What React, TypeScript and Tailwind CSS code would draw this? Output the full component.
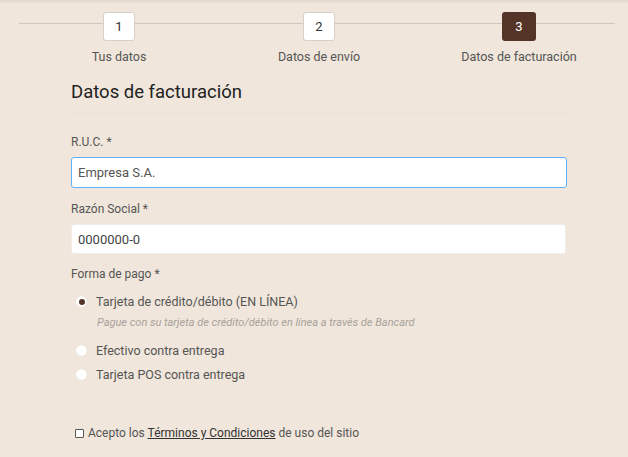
import React, { useState } from 'react';

const STEPS = [
  { n: 1, label: 'Tus datos' },
  { n: 2, label: 'Datos de envío' },
  { n: 3, label: 'Datos de facturación' },
];

const PAYMENTS = [
  { id: 'online', label: 'Tarjeta de crédito/débito (EN LÍNEA)', hint: 'Pague con su tarjeta de crédito/débito en línea a través de Bancard' },
  { id: 'cash', label: 'Efectivo contra entrega' },
  { id: 'pos', label: 'Tarjeta POS contra entrega' },
];

export default function App() {
  const [payment, setPayment] = useState('online');
  const current = 3;

  return (
    <div className="relative min-h-[457px] w-full bg-[#f0e6db] text-[#444] font-['Roboto','Liberation_Sans',sans-serif]">
      {/* top shadow */}
      <div className="absolute inset-x-0 top-0 h-[4px] bg-gradient-to-b from-[#e2d8cc] to-transparent" />

      {/* Stepper */}
      <div className="relative pt-[12px]">
        <div className="absolute left-[19px] right-[13px] top-[23px] h-px bg-[#cfc8c0]" />
        <div className="relative flex pl-[19px]">
          {STEPS.map((s) => (
            <div key={s.n} className="flex w-[200px] flex-col items-center">
              <div
                className={
                  s.n === current
                    ? 'flex h-[29px] w-[34px] items-center justify-center rounded-[3px] bg-[#553428] text-[13px] text-white'
                    : 'flex h-[29px] w-[32px] items-center justify-center rounded-[3px] border border-[#d6d0ca] bg-white text-[13px] text-[#333]'
                }
              >
                {s.n}
              </div>
              <div className="mt-[8px] text-[12.5px] leading-[16px] text-[#555]">{s.label}</div>
            </div>
          ))}
        </div>
      </div>

      {/* Form */}
      <div className="ml-[71px] w-[496px] pt-[14px]">
        <h2 className="text-[18.5px] leading-[26px] text-[#222]">Datos de facturación</h2>
        <div className="mt-[8px] h-px bg-[#e9e1d7]" />

        <label className="mt-[20px] block text-[12px] leading-[16px] text-[#555]">R.U.C. *</label>
        <input
          defaultValue="Empresa S.A."
          className="mt-[7px] block h-[31px] w-[496px] rounded-[3px] border border-[#5fb0f7] bg-white px-[6px] text-[13px] text-[#555] outline-none"
        />

        <label className="mt-[13px] block text-[12px] leading-[16px] text-[#555]">Razón Social *</label>
        <input
          defaultValue="0000000-0"
          className="mt-[7px] block h-[30px] w-[495px] rounded-[3px] border border-[#f0ece8] bg-white px-[6px] text-[13px] text-[#444] outline-none"
        />

        <div className="mt-[12px] text-[12px] leading-[16px] text-[#555]">Forma de pago *</div>

        <div className="mt-[11px] flex flex-col">
          {PAYMENTS.map((p) => (
            <div key={p.id} className="mb-[7px]">
              <button type="button" onClick={() => setPayment(p.id)} className="flex h-[17px] items-center gap-[9px] pl-[5px]">
                <span className="flex h-[11px] w-[11px] items-center justify-center rounded-full bg-white shadow-[0_0_1px_rgba(0,0,0,0.15)]">
                  {payment === p.id && <span className="h-[6px] w-[6px] rounded-full bg-[#553428]" />}
                </span>
                <span className="text-[12.5px] leading-[17px] text-[#555]">{p.label}</span>
              </button>
              {p.hint && (
                <div className="mt-[6px] mb-[5px] pl-[26px] text-[11px] italic leading-[14px] text-[#a8a29c]">{p.hint}</div>
              )}
            </div>
          ))}
        </div>

        <label className="mt-[35px] flex h-[16px] items-center gap-[4px] pl-[4px] text-[12px] leading-[16px] text-[#555]">
          <span className="h-[9px] w-[9px] rounded-[1px] border border-[#555] bg-white" />
          <span>
            Acepto los <span className="text-[#333] underline">Términos y Condiciones</span> de uso del sitio
          </span>
        </label>
      </div>
    </div>
  );
}
